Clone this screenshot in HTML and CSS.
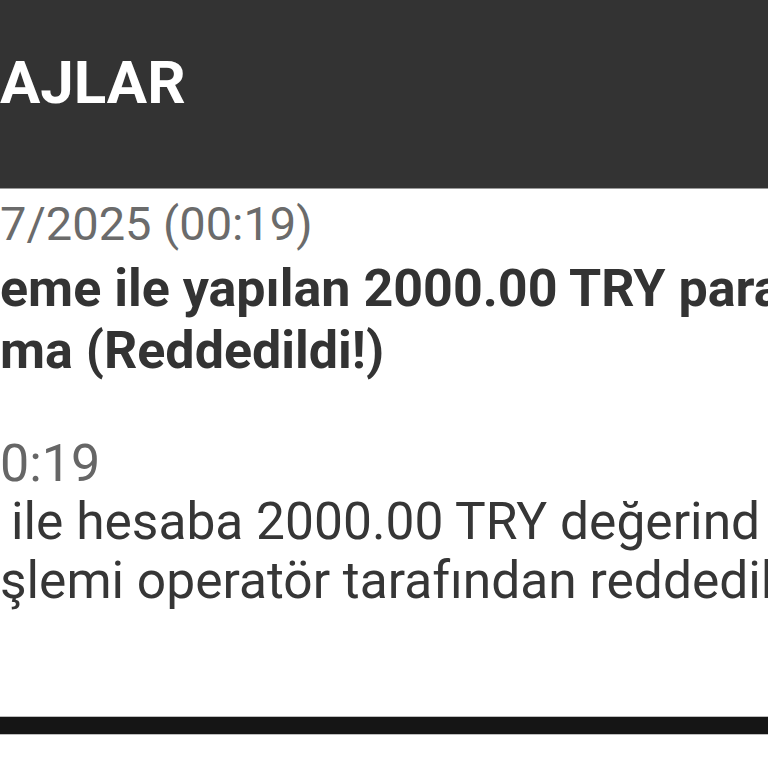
FILE: index.html
```html
<!DOCTYPE html>
<html lang="tr">
<head>
<meta charset="utf-8">
<title>Mesajlar</title>
<link rel="stylesheet" href="styles.css">
</head>
<body>
<div class="screen">
  <header class="topbar">
    <h1 class="title">AJLAR</h1>
  </header>
  <section class="message">
    <div class="date">7/2025 (00:19)</div>
    <div class="subject">
      <div class="line">eme ile yapılan 2000.00 TRY para</div>
      <div class="line">ma (Reddedildi!)</div>
    </div>
    <div class="time">0:19</div>
    <div class="body">
      <div class="line indent">ile hesaba 2000.00 TRY değerind</div>
      <div class="line">şlemi operatör tarafından reddedil</div>
    </div>
  </section>
  <div class="bottombar"></div>
</div>
</body>
</html>
```

FILE: styles.css
```css
html, body {
  margin: 0;
  padding: 0;
  background: #ffffff;
}
.screen {
  width: 768px;
  height: 768px;
  overflow: hidden;
  font-family: Roboto, "Noto Sans", Arial, sans-serif;
  background: #ffffff;
}
.topbar {
  height: 189px;
  background: #333333;
  border-bottom: 1px solid #9a9a9a;
  display: flex;
  align-items: center;
  box-sizing: border-box;
}
.title {
  margin: 0;
  margin-top: -22px;
  color: #ffffff;
  font-size: 60px;
  font-weight: 700;
  line-height: 1;
  white-space: nowrap;
}
.message {
  padding-top: 5px;
  height: 521px;
  box-sizing: border-box;
}
.line {
  white-space: nowrap;
}
.date {
  color: #6b6b6b;
  font-size: 47px;
  line-height: 60px;
  white-space: nowrap;
}
.subject {
  margin-top: 4px;
  color: #333333;
  font-size: 52px;
  font-weight: 700;
  line-height: 62px;
}
.time {
  margin-top: 53px;
  color: #666666;
  font-size: 52px;
  line-height: 58px;
}
.body {
  margin-top: -1px;
  color: #363636;
  font-size: 51.5px;
  line-height: 59px;
}
.indent {
  padding-left: 11px;
}
.bottombar {
  margin-top: 6px;
  height: 17px;
  background: #151515;
  border-top: 1px solid #bdbdbd;
  border-bottom: 1px solid #bdbdbd;
}
```
